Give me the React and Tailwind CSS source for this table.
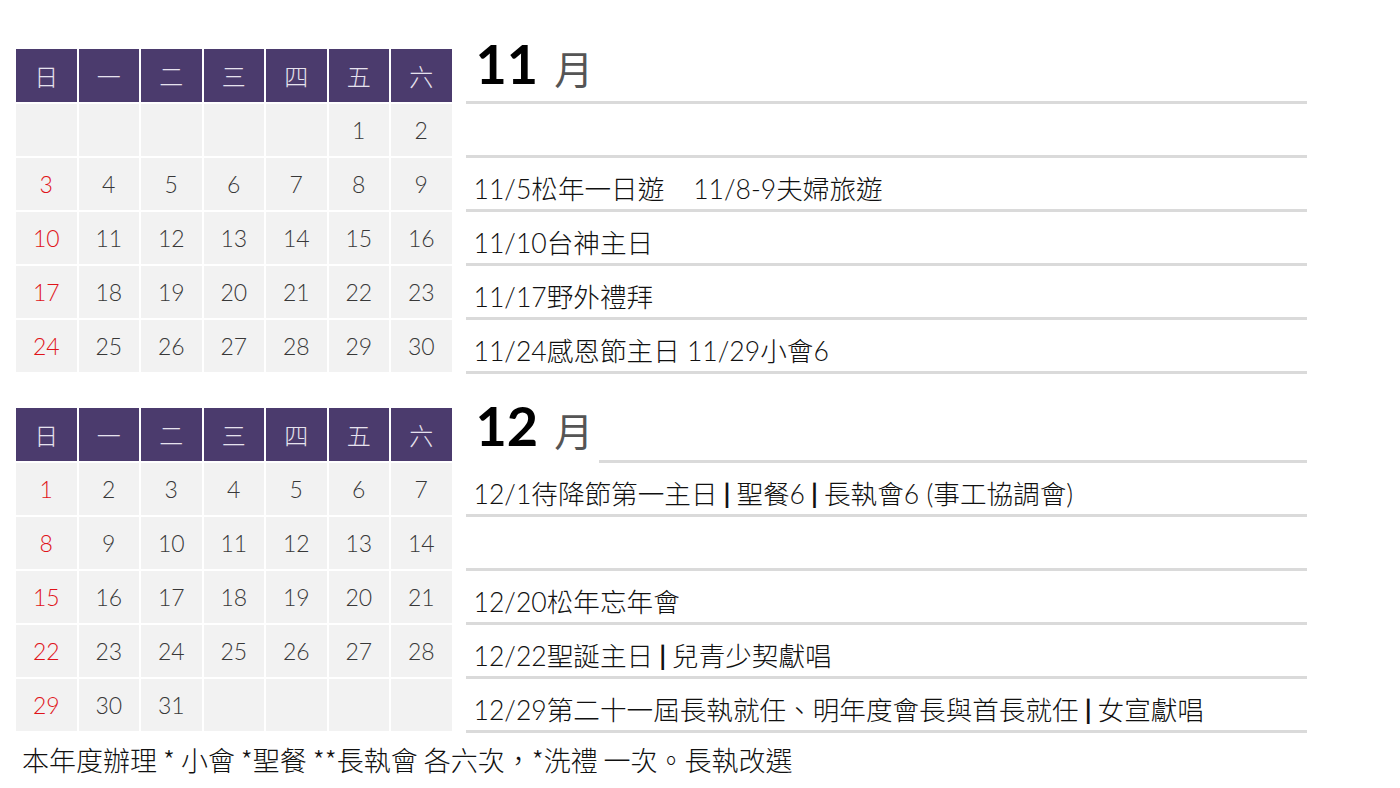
import React from 'react';

const weekdays = ['日', '一', '二', '三', '四', '五', '六'];

const months = [
    {
        title: '11',
        fullLine: true,
        weeks: [
            [null, null, null, null, null, 1, 2],
            [3, 4, 5, 6, 7, 8, 9],
            [10, 11, 12, 13, 14, 15, 16],
            [17, 18, 19, 20, 21, 22, 23],
            [24, 25, 26, 27, 28, 29, 30],
        ],
        events: [
            '',
            '11/5松年一日遊\u00a0\u00a0\u00a0\u00a011/8-9夫婦旅遊',
            '11/10台神主日',
            '11/17野外禮拜',
            '11/24感恩節主日 11/29小會6',
        ],
    },
    {
        title: '12',
        fullLine: false,
        weeks: [
            [1, 2, 3, 4, 5, 6, 7],
            [8, 9, 10, 11, 12, 13, 14],
            [15, 16, 17, 18, 19, 20, 21],
            [22, 23, 24, 25, 26, 27, 28],
            [29, 30, 31, null, null, null, null],
        ],
        events: [
            '12/1待降節第一主日 | 聖餐6 | 長執會6 (事工協調會)',
            '',
            '12/20松年忘年會',
            '12/22聖誕主日 | 兒青少契獻唱',
            '12/29第二十一屆長執就任、明年度會長與首長就任 | 女宣獻唱',
        ],
    },
];

const textFont = { fontFamily: 'Lato, "Noto Sans CJK TC", sans-serif' };
const cjkFont = { fontFamily: '"Noto Sans CJK TC", sans-serif' };

// event text, the " | " pieces are drawn as a heavier bar
const EventText = ({ text }) => {
    const parts = text.split(' | ');
    return (
        <span>
            {parts.map((p, i) => (
                <React.Fragment key={i}>
                    {i > 0 && <span className="font-bold mx-[6px]">|</span>}
                    {p}
                </React.Fragment>
            ))}
        </span>
    );
};

const MonthBlock = ({ month }) => {
    return (
        <div className="flex items-start gap-[14px]">
            <div className="grid grid-cols-[repeat(7,60.5px)] gap-x-[2px] gap-y-[2px]">
                {weekdays.map((d) => (
                    <div
                        key={d}
                        className="h-[53px] bg-[#4b3b6d] flex items-center justify-center text-[24px] text-[#e6e2ee] font-light"
                        style={cjkFont}
                    >
                        {d}
                    </div>
                ))}
                {month.weeks.flat().map((n, i) => (
                    <div
                        key={i}
                        className={`h-[52px] bg-[#f2f2f2] flex items-center justify-center text-[23px] font-light ${i % 7 === 0 ? 'text-[#e0141a]' : 'text-[#383838]'}`}
                        style={{ fontFamily: 'Lato, sans-serif' }}
                    >
                        {n}
                    </div>
                ))}
            </div>

            <div className="w-[841px] flex flex-col">
                <div className={`h-[55px] flex items-end ${month.fullLine ? 'border-b-[3px] border-[#dadada]' : ''}`}>
                    <div className="flex items-baseline pl-[10px] pb-[10px]">
                        <span className="text-[54px] leading-none font-bold text-black" style={{ fontFamily: 'Lato, sans-serif' }}>
                            {month.title}
                        </span>
                        <span className="ml-[16px] text-[39px] leading-none text-[#555]" style={cjkFont}>
                            月
                        </span>
                    </div>
                    {!month.fullLine && <div className="flex-1 self-stretch ml-[6px] border-b-[3px] border-[#dadada]"></div>}
                </div>
                {month.events.map((e, i) => (
                    <div key={i} className="h-[54px] flex items-end pl-[8px] pb-[7px] border-b-[3px] border-[#dadada]">
                        <div className="text-[26.6px] leading-[26px] text-[#111] font-light whitespace-nowrap" style={textFont}>
                            <EventText text={e} />
                        </div>
                    </div>
                ))}
            </div>
        </div>
    );
};

const App = () => {
    return (
        <div className="w-[1400px] h-[788px] bg-white pt-[49px] pl-[16px] overflow-hidden">
            <div className="flex flex-col gap-[34px]">
                {months.map((m) => (
                    <MonthBlock key={m.title} month={m} />
                ))}
            </div>
            <div
                className="mt-[12px] pl-[6px] text-[27px] leading-[30px] text-[#111] font-light whitespace-nowrap"
                style={cjkFont}
            >
                本年度辦理 * 小會 *聖餐 **長執會 各六次，*洗禮 一次。長執改選
            </div>
        </div>
    );
};

export default App;
